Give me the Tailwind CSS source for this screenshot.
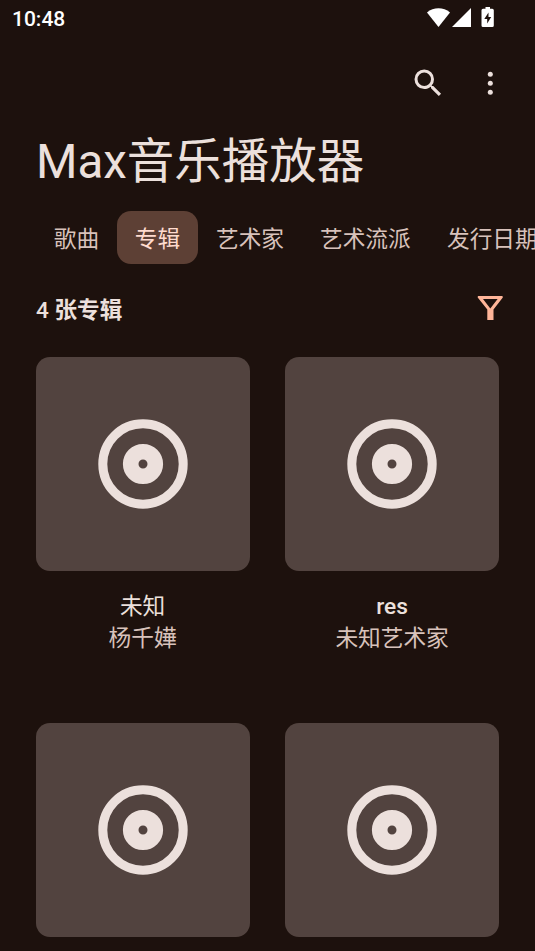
<!DOCTYPE html>
<html lang="zh-CN">
<head>
<meta charset="utf-8">
<title>Max音乐播放器</title>
<script src="https://cdn.jsdelivr.net/npm/@tailwindcss/browser@4"></script>
</head>
<body class="w-[535px] h-[951px] overflow-hidden bg-[#1d110d] text-[#ece0dc] font-[Roboto,'Noto_Sans_CJK_SC',sans-serif]">
<svg class="hidden">
  <symbol id="disc" viewBox="0 0 90 90">
    <circle cx="45" cy="45" r="40.200" fill="none" stroke="#ece0dc" stroke-width="9"/>
    <circle cx="45" cy="45" r="12.300" fill="none" stroke="#ece0dc" stroke-width="15.600"/>
  </symbol>
</svg>
<div class="flex flex-col w-[535px] h-[951px] overflow-hidden">
  <header class="flex h-9 shrink-0 items-center justify-between pl-3 pr-10 text-white">
    <span class="pt-0.5 text-[21px] leading-9 font-medium">10:48</span>
    <svg class="w-[70px] h-9 shrink-0" viewBox="425 0 70 36" fill="currentColor">
      <path d="M427 12.400C433.500 6.900 443.500 6.900 450 12.400L438.500 27Z"/>
      <path d="M471 8V27H452Z"/>
      <path fill-rule="evenodd" d="M485.500 7h4.500v1.700h2.300a1.500 1.500 0 0 1 1.500 1.500v15.300a1.500 1.500 0 0 1-1.500 1.500h-9.300a1.500 1.500 0 0 1-1.500-1.500v-15.300a1.500 1.500 0 0 1 1.500-1.500h2.500zM488.500 12.500L484.300 19h2.900v4.500l4-6.500h-2.700z"/>
    </svg>
  </header>
  <div class="flex h-[94px] shrink-0 items-center justify-end gap-[26px] pr-[27px]">
    <svg class="size-9" viewBox="0 0 24 24" fill="currentColor"><path d="M15.500 14h-.79l-.28-.27A6.471 6.471 0 0 0 16 9.500 6.500 6.500 0 1 0 9.500 16c1.610 0 3.090-.59 4.230-1.570l.27.28v.79l5.200 5.200L20.700 19.200zm-6 0a4.500 4.500 0 1 1 0-9 4.500 4.500 0 0 1 0 9z"/></svg>
    <svg class="size-9" viewBox="0 0 36 36" fill="currentColor"><circle cx="18.300" cy="9.200" r="2.500"/><circle cx="18.300" cy="18.200" r="2.500"/><circle cx="18.300" cy="27.200" r="2.500"/></svg>
  </div>
  <h1 class="h-[81px] shrink-0 pl-9 text-[47.500px] leading-[65px] whitespace-nowrap">Max音乐播放器</h1>
  <nav class="flex h-[53px] shrink-0 pl-9 text-[22.700px] leading-[57px] whitespace-nowrap text-[#d8c2bb]">
    <a class="w-[81px] shrink-0 text-center">歌曲</a>
    <a class="w-[81px] shrink-0 rounded-[14px] bg-[#5d4035] text-center text-[#ffdbce]">专辑</a>
    <a class="w-[104px] shrink-0 pl-[18px]">艺术家</a>
    <a class="w-[127px] shrink-0 pl-[18px]">艺术流派</a>
    <a class="w-[150px] shrink-0 pl-[18px]">发行日期</a>
  </nav>
  <div class="flex h-[93px] shrink-0 items-start justify-between pt-[27px] pl-9 pr-[27px]">
    <span class="pt-1 text-[22.600px] leading-8 font-medium">4 <b class="font-bold">张专辑</b></span>
    <svg class="size-9" viewBox="0 0 36 36"><path fill="#ffb599" fill-rule="evenodd" d="M6.300 5H30.200Q30.900 5 30.800 6.500L21.500 18.500V29H15.300V18.500L5.700 6.500Q5.500 5 6.300 5ZM11 8L18.300 17.500L25.600 8Z"/></svg>
  </div>
  <main class="grid shrink-0 grid-cols-[214px_214px] gap-x-[35.500px] pl-[35.600px]">
    <article class="h-[366px]">
      <div class="flex h-[214px] items-center justify-center rounded-[14px] bg-[#52433f]"><svg class="size-[90px]"><use href="#disc"/></svg></div>
      <div class="mt-5 text-center text-[22.700px] leading-8"><p>未知</p><p class="text-[#d8c2bb]">杨千嬅</p></div>
    </article>
    <article class="h-[366px]">
      <div class="flex h-[214px] items-center justify-center rounded-[14px] bg-[#52433f]"><svg class="size-[90px]"><use href="#disc"/></svg></div>
      <div class="mt-5 text-center text-[22.700px] leading-8"><p class="font-medium">res</p><p class="text-[#d8c2bb]">未知艺术家</p></div>
    </article>
    <article><div class="flex h-[214px] items-center justify-center rounded-[14px] bg-[#52433f]"><svg class="size-[90px]"><use href="#disc"/></svg></div></article>
    <article><div class="flex h-[214px] items-center justify-center rounded-[14px] bg-[#52433f]"><svg class="size-[90px]"><use href="#disc"/></svg></div></article>
  </main>
</div>
</body>
</html>
